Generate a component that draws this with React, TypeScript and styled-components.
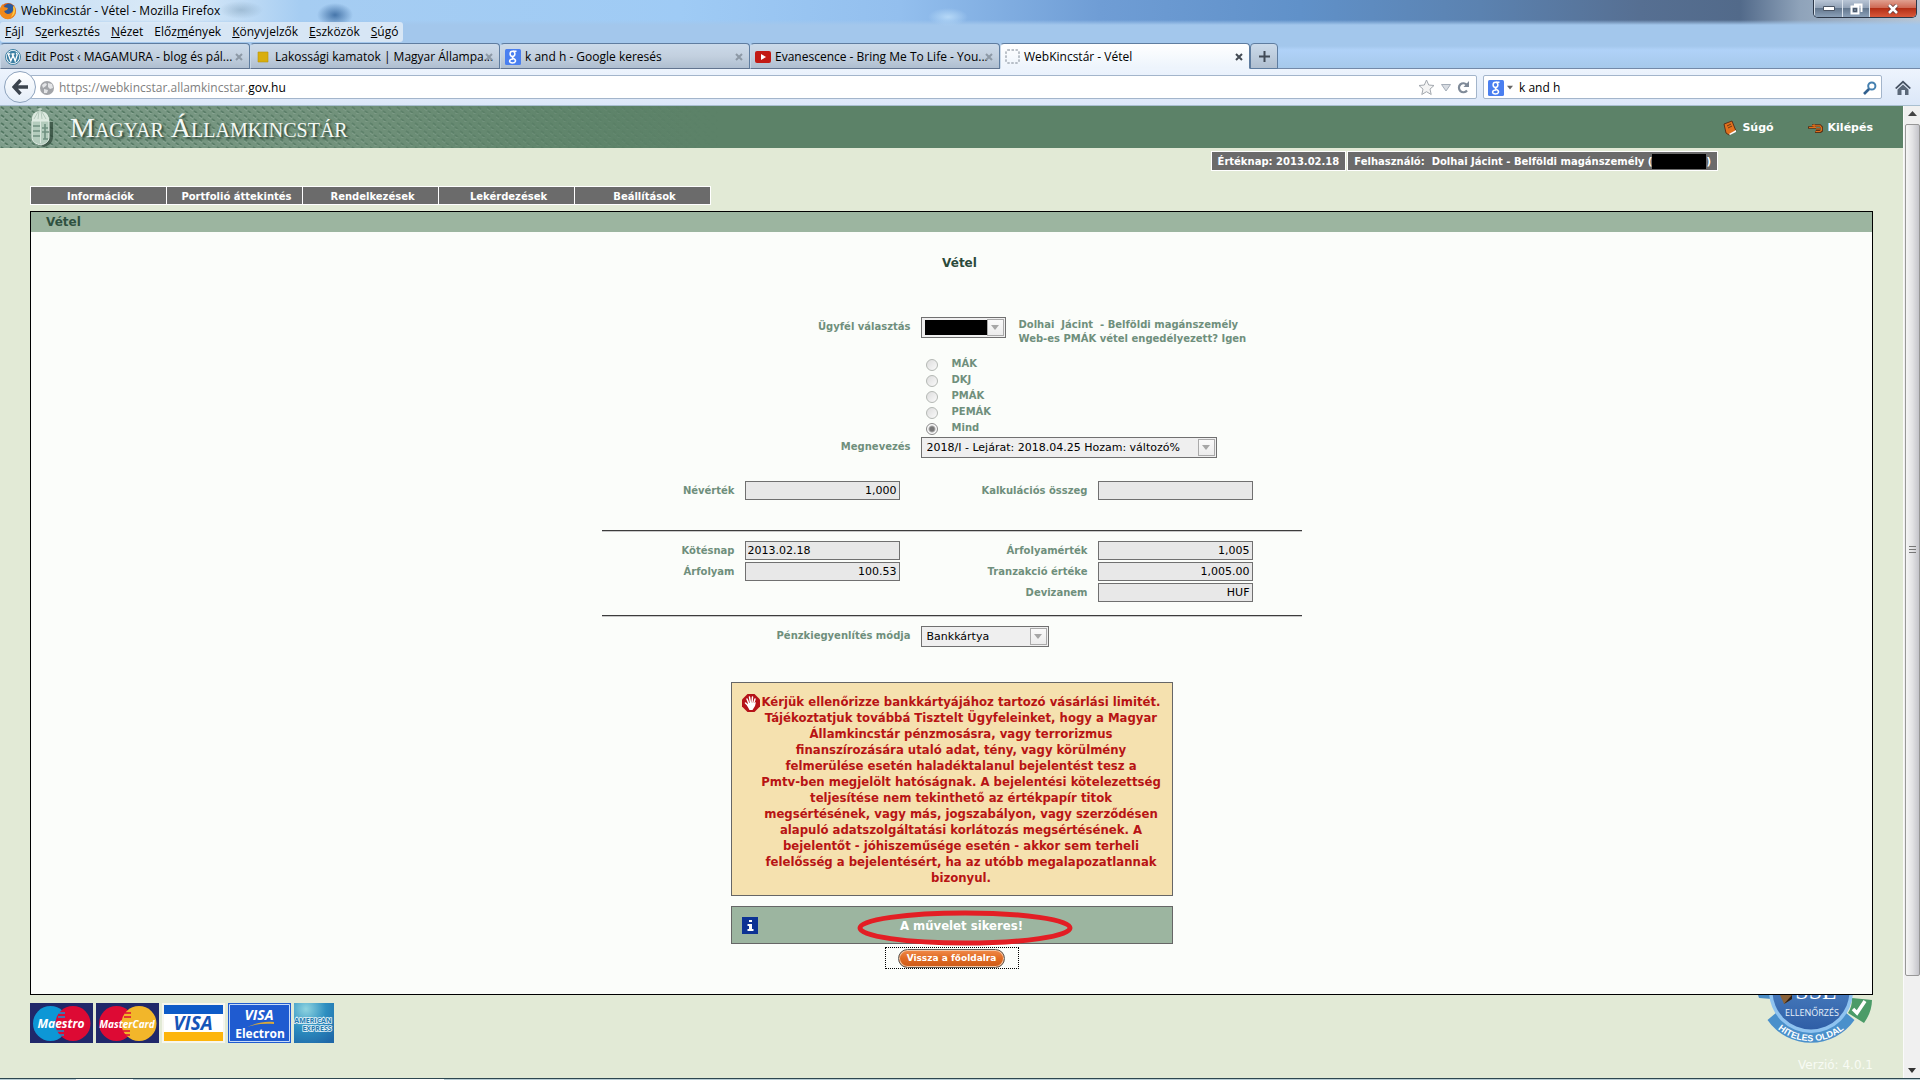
import React from "react";
import styled, { createGlobalStyle } from "styled-components";

const ui = '"Open Sans", "Noto Sans", sans-serif';
const web = '"DejaVu Sans", Verdana, sans-serif';

const GlobalStyle = createGlobalStyle`
  *, *::before, *::after { box-sizing: border-box; }
  body { margin: 0; font-family: ${web}; }
  button, input, select { font: inherit; margin: 0; }
  svg { display: block; flex: none; }
`;

const Window = styled.div`
  min-height: 100vh;
  display: flex;
  flex-direction: column;
  overflow: hidden;
`;

/* ---------- browser chrome ---------- */

const Chrome = styled.header`
  font: 12px/16px ${ui};
  color: #000;
  background:
    radial-gradient(ellipse 18px 12px at 335px 15px, #2f6098cc, transparent),
    radial-gradient(ellipse 22px 9px at 241px 10px, #6f8fa866, transparent),
    radial-gradient(ellipse 20px 9px at 948px 17px, #b5d8f7, transparent),
    linear-gradient(#0000 20px, #a3c7ec 25px, #a3c7ec 46px, #b0d2f8 50px, #a5c8ea 69px),
    linear-gradient(90deg, #c3dcf3 0, #dcebf8 180px, #a6cdf2 300px, #9fcbf5 680px, #93bfee 900px, #6f9dd5 1100px, #6091c9 1300px, #5b82b0 1480px, #566f92 1640px, #526a8a 1740px, #8fa3ba 1800px, #b7c6d6 100%);
`;

const TitleBar = styled.div`
  display: flex;
  height: 22px;
  justify-content: space-between;
`;

const TitleText = styled.div`
  display: flex;
  gap: 5px;
  align-items: center;
`;

const WindowButtons = styled.div`
  display: flex;
  height: 18px;
  margin-right: 3px;
  border: 1px solid #2c3748;
  border-top: 0;
  border-radius: 0 0 5px 5px;
  overflow: hidden;
`;

const WindowButton = styled.button<{ $w: number; $danger?: boolean }>`
  width: ${(p) => p.$w}px;
  padding: 0;
  border: 0;
  border-left: 1px solid #d9e2ec;
  display: grid;
  place-items: center;
  background: ${(p) =>
    p.$danger
      ? "linear-gradient(#e0a090, #cf6a55 45%, #b42f16 50%, #d9583a)"
      : "linear-gradient(#b9c6d6, #93a3b8 45%, #64788f 50%, #8ba0b8)"};
`;

const MenuBar = styled.nav`
  display: flex;
  width: max-content;
  height: 20px;
  margin-bottom: 1px;
  padding: 0 5px;
  gap: 11px;
  align-items: center;
  background: #e3edf8cc;
  border-radius: 3px;
`;

const MenuItem = styled.button`
  padding: 0;
  border: 0;
  background: none;
  color: #000;
`;

const TabStrip = styled.div`
  display: flex;
  height: 26px;
  box-shadow: inset 0 -1px #7389a8;
`;

const Tab = styled.div<{ $active?: boolean }>`
  width: 250px;
  min-width: 0;
  padding: 1px 6px 0 4px;
  display: flex;
  gap: 4px;
  align-items: center;
  border: 1px solid #5f7da0;
  border-left-color: #c9d8e8;
  border-bottom-color: ${(p) => (p.$active ? "#eef4fc" : "#62748f")};
  border-radius: 4px 4px 0 0;
  background: ${(p) => (p.$active ? "linear-gradient(#fff, #edf4fc)" : "linear-gradient(#cbdaea, #c3d0df 50%, #afbed0)")};
`;

const TabTitle = styled.span`
  flex: 1;
  min-width: 0;
  white-space: nowrap;
`;

const TabClose = styled.button<{ $active?: boolean }>`
  padding: 0;
  border: 0;
  background: none;
  color: ${(p) => (p.$active ? "#444b54" : "#8d99a6")};
`;

const NewTab = styled.button`
  width: 28px;
  padding: 0;
  display: grid;
  place-items: center;
  border: 1px solid #5f7da0;
  border-radius: 4px 4px 0 0;
  background: linear-gradient(#cbdaea, #b0bfd0);
`;

const NavBar = styled.div`
  height: 37px;
  display: flex;
  align-items: center;
  padding: 0 9px 0 4px;
  background: linear-gradient(#edf4fd, #dbe7f8);
  border-bottom: 1px solid #a9bfd0;
`;

const BackButton = styled.button`
  width: 32px;
  height: 32px;
  padding: 0;
  display: grid;
  place-items: center;
  border: 1px solid #8ea3bd;
  border-radius: 50%;
  background: linear-gradient(#fff, #e4edf8);
  z-index: 1;
`;

const Address = styled.div`
  flex: 1;
  height: 24px;
  margin-left: -6px;
  padding: 1px 6px 0 9px;
  display: flex;
  align-items: center;
  background: #fff;
  border: 1px solid #a3b5cb;
  border-radius: 2px;
`;

const Url = styled.div`
  flex: 1;
  margin-left: 5px;
  color: #808080;
  b { font-weight: 400; color: #000; }
`;

const AddressIcons = styled.div`
  display: flex;
  align-items: center;
  gap: 6px;
`;

const SearchBox = styled.label`
  width: 399px;
  height: 24px;
  margin: 0 13px 0 6px;
  padding: 1px 4px 0;
  display: flex;
  align-items: center;
  gap: 3px;
  background: #fff;
  border: 1px solid #a3b5cb;
  border-radius: 2px;
`;

const SearchInput = styled.input`
  flex: 1;
  min-width: 0;
  padding: 0 3px;
  border: 0;
  background: none;
  color: #000;
`;

/* ---------- web page ---------- */

const Viewport = styled.div`
  flex: 1;
  display: flex;
  background: #e2ead6;
`;

const Page = styled.div`
  flex: 1;
  min-width: 0;
`;

const Banner = styled.div`
  height: 42px;
  display: grid;
  background: #5c8268;
`;

const BannerTexture = styled.svg`
  grid-area: 1 / 1;
`;

const BannerContent = styled.div`
  grid-area: 1 / 1;
  z-index: 1;
  display: flex;
  align-items: center;
  padding: 2px 30px 0;
`;

const BrandName = styled.h1`
  flex: 1;
  margin: 0 0 0 16px;
  font: small-caps 400 28px/32px "Liberation Serif", "Times New Roman", serif;
  color: #f4f8f4;
  text-shadow: 2px 2px 2px #2e4636;
`;

const BannerLink = styled.a`
  display: flex;
  align-items: center;
  gap: 5px;
  margin-left: 34px;
  font: bold 11px/16px ${web};
  color: #fff;
  text-decoration: none;
`;

const SessionInfo = styled.div`
  display: flex;
  justify-content: flex-end;
  gap: 1px;
  padding: 3px 185px 0 0;
`;

const InfoTag = styled.div`
  height: 20px;
  display: flex;
  align-items: center;
  padding: 1px 6px 0;
  white-space: pre;
  font: bold 10px/16px ${web};
  color: #fff;
  background: #6b6b6b;
  border: 1px solid #fff;
`;

const Redacted = styled.span<{ $w: number }>`
  width: ${(p) => p.$w}px;
  height: 15px;
  background: #000;
`;

const MainNav = styled.nav`
  width: max-content;
  margin: 15px 0 6px 30px;
  display: flex;
  gap: 1px;
  padding: 1px;
  background: #fff;
`;

const MainNavItem = styled.a`
  width: 135px;
  height: 17px;
  padding-left: 4px;
  text-align: center;
  white-space: nowrap;
  font: bold 10px/20px ${web};
  color: #fff;
  background: #6b6b6b;
  text-decoration: none;
`;

const Panel = styled.main`
  margin: 0 30px;
  border: 1px solid #000;
  background: #fbfdfa;
`;

const PanelTitle = styled.div`
  height: 20px;
  padding-left: 15px;
  font: bold 12px/21px ${web};
  color: #2f5140;
  background: #9cb5a0;
`;

const Form = styled.form`
  width: 700px;
  margin: 0 auto;
  padding: 23px 0 25px;
  font: bold 10px/14px ${web};
  color: #6f8f7c;
`;

const FormTitle = styled.h2`
  margin: 0 0 46px;
  padding-left: 16px;
  text-align: center;
  font: bold 12px/16px ${web};
  color: #2b4a3b;
`;

const ChoiceRow = styled.div<{ $after?: number }>`
  display: grid;
  grid-template-columns: 309px max-content 1fr;
  column-gap: 10px;
  align-items: start;
  margin-bottom: ${(p) => p.$after ?? 0}px;
`;

const FieldLabel = styled.label`
  text-align: right;
  line-height: 19px;
  white-space: nowrap;
`;

const SelectFrame = styled.div<{ $w: number }>`
  width: ${(p) => p.$w}px;
  height: 21px;
  padding: 1px 1px 1px 0;
  display: flex;
  align-items: center;
  border: 1px solid #707070;
  background: #efefef;
`;

const SelectInput = styled.select`
  flex: 1;
  min-width: 0;
  height: 17px;
  padding: 0 0 0 5px;
  appearance: none;
  border: 0;
  border-radius: 0;
  background: none;
  color: #000;
  font: 11px/17px ${web};
`;

const ArrowBox = styled.span`
  width: 17px;
  height: 17px;
  flex: none;
  display: grid;
  place-items: center;
  border: 1px solid #aaa;
  background: linear-gradient(#fafafa, #ececec);
`;

const MaskedSelect = styled.span`
  flex: 1;
  min-width: 0;
  height: 15px;
  margin-left: 3px;
  display: flex;
  background: #000;
`;

const ClientNote = styled.p`
  margin: 1px 0 0 3px;
  white-space: pre;
`;

const RadioGroup = styled.fieldset`
  margin: 0 0 0 324px;
  padding: 0;
  border: 0;
`;

const RadioOption = styled.label`
  height: 16px;
  display: flex;
  align-items: flex-start;
  gap: 14px;
`;

const Radio = styled.input`
  appearance: none;
  width: 12px;
  height: 12px;
  margin-top: 2px;
  border: 1px solid #b4b8b4;
  border-radius: 50%;
  background: linear-gradient(135deg, #ddd, #fafafa);
  &:checked {
    border-color: #8a8a8a;
    background: radial-gradient(circle, #777 0 2px, #aaa 3px, #fafafa 4px);
  }
`;

const FieldGrid = styled.div`
  display: grid;
  grid-template-columns: 133px 155px 178px 155px;
  column-gap: 10px;
  row-gap: 2px;
`;

const TextField = styled.input<{ $left?: boolean }>`
  width: 100%;
  height: 19px;
  padding: 0 2px;
  border: 1px solid #707070;
  border-radius: 0;
  background: #e8e8e8;
  color: #000;
  font: 11px/17px ${web};
  text-align: ${(p) => (p.$left ? "left" : "right")};
`;

const Rule = styled.hr<{ $before: number }>`
  height: 2px;
  margin: ${(p) => p.$before}px 0 9px;
  border: 0;
  border-top: 1px solid #3c3c3c;
  background: #c8c8c8;
`;

const Notice = styled.section`
  width: 442px;
  margin: 35px auto 10px;
  padding: 11px 9px 9px 10px;
  display: flex;
  border: 1px solid #666;
  background: #f5e1af;
`;

const NoticeText = styled.p`
  flex: 1;
  margin: 0;
  text-align: center;
  white-space: nowrap;
  font: bold 13px/16px "DejaVu Sans Condensed", ${web};
  color: #b81414;
`;

const Result = styled.section`
  position: relative;
  width: 442px;
  height: 38px;
  margin: 0 auto 3px;
  padding: 1px 6px 0 10px;
  display: flex;
  align-items: center;
  border: 1px solid #666;
  background: #9cb5a0;
`;

const ResultText = styled.p`
  flex: 1;
  margin: 0;
  text-align: center;
  font: bold 13px/16px "DejaVu Sans Condensed", ${web};
  color: #fff;
`;

const Marker = styled.svg`
  position: absolute;
  left: 125px;
  top: 3px;
`;

const BackFrame = styled.div`
  width: 134px;
  height: 22px;
  margin: 0 auto;
  display: grid;
  place-items: center;
  border: 1px dotted #000;
`;

const BackHome = styled.button`
  height: 19px;
  padding: 0 8px;
  white-space: nowrap;
  font: bold 9px/15px ${web};
  color: #fff;
  border: 1px solid #5f5a55;
  border-radius: 10px;
  background: linear-gradient(#f08a4a, #e06a22 50%, #cc5a18);
  box-shadow: inset 0 0 0 1px #f3c7a6;
`;

const Footer = styled.footer`
  display: flex;
  justify-content: space-between;
  padding: 0 30px;
`;

const Cards = styled.div`
  display: flex;
  gap: 3px;
  padding-top: 8px;
`;

const FooterRight = styled.div`
  display: flex;
  flex-direction: column;
  align-items: flex-end;
`;

const Version = styled.span`
  margin-top: 12px;
  font: 12px/16px ${web};
  color: #f8fbf4;
`;

const Scrollbar = styled.div`
  width: 17px;
  display: flex;
  flex-direction: column;
  align-items: center;
  justify-content: space-between;
  padding: 5px 1px;
  gap: 8px;
  background: #f0f0f0;
  border-left: 1px solid #fafafa;
`;

const Thumb = styled.div`
  width: 15px;
  flex: 1;
  margin-bottom: 84px;
  display: grid;
  place-items: center;
  border: 1px solid #979797;
  border-radius: 2px;
  background: linear-gradient(90deg, #f6f6f6, #e2e2e4 50%, #c4c4ca);
`;

const Taskbar = styled.div`
  height: 2px;
  border-top: 1px solid #2d4750;
  background: linear-gradient(90deg, #b8cdd4 76px, #fff 76px 133px, #b8cdd4 133px 200px, #fff 200px 444px, #b8cdd4 444px);
`;

/* ---------- drawings ---------- */

const Firefox = () => (
  <svg width="16" height="18" viewBox="0 0 16 18">
    <circle cx="8" cy="9" r="8" fill="#d9601a" />
    <circle cx="9" cy="7" r="5.4" fill="#2c5a9c" />
    <path d="M0 7C1 4 2 3 3 2l1 3 4 1-1 2-3 1c1 3 4 4 7 2 2-1 3-4 2-7 3 3 4 8 0 11-4 4-11 2-13-3z" fill="#f08a1c" />
    <path d="M14 4c2 4 1 9-3 11 2-3 3-7 2-10z" fill="#fbd04a" />
  </svg>
);

const WordPress = () => (
  <svg width="16" height="16" viewBox="0 0 16 16">
    <circle cx="8" cy="8" r="7.5" fill="#fff" stroke="#3c7fa3" />
    <circle cx="8" cy="8" r="6.2" fill="#3c7fa3" />
    <path d="M3.2 5l2.6 7L7.8 7 7 5M7.6 5l2.6 7 2-6c0-1-1-1.500-.7-2.300M2.800 5h2.500M6.500 5h3" fill="none" stroke="#fff" strokeWidth="1.300" />
  </svg>
);

const GoldSquare = () => (
  <svg width="16" height="16"><path d="M3 3h10v10H3z" fill="#d9ae0c" stroke="#b8940c" strokeWidth=".6" /></svg>
);

const GoogleIcon = () => (
  <svg width="16" height="16" viewBox="0 0 16 16">
    <rect width="16" height="16" rx="1.500" fill="#4a7ff0" />
    <g fill="none" stroke="#fff" strokeWidth="1.500">
      <ellipse cx="7.500" cy="4.800" rx="2.400" ry="2.600" />
      <path d="M8 2.200h3.500M8.500 7.300c-2 .8-1 1.700.3 2.400 3 1.600 1.700 4.300-1.300 4.300-4 0-4-4 .8-4" />
    </g>
  </svg>
);

const YouTube = () => (
  <svg width="16" height="12"><rect width="16" height="12" rx="2" fill="#c21a14" /><path d="M6 3l5 3-5 3z" fill="#fff" /></svg>
);

const BlankPage = () => (
  <svg width="15" height="15"><rect x="1" y="1" width="13" height="13" rx="1.500" fill="none" stroke="#7c8692" strokeDasharray="2.500 1.500" /></svg>
);

const CloseX = () => (
  <svg width="8" height="8"><path d="M1 1l6 6M7 1l-6 6" stroke="currentColor" strokeWidth="2" /></svg>
);

const Triangle = ({ w = 8, c = "#a6a6a6" }: { w?: number; c?: string }) => (
  <svg width={w} height="5" viewBox="0 0 8 5"><path d="M0 0h8L4 5z" fill={c} /></svg>
);

const Globe = () => (
  <svg width="14" height="14" viewBox="0 0 14 14">
    <circle cx="7" cy="7" r="7" fill="#a2a4a8" />
    <path d="M2 4l3-2 2 1-1 2-3 2zM8 2l4 1 1 4-3 1-2-2zM4 8l4 1-1 3-3 0z" fill="#e4e5e7" />
  </svg>
);

const Crest = () => (
  <svg width="24" height="40" viewBox="0 2 24 40">
    <path d="M3 16h20v15c0 6-5 9-9 10-5-1-11-4-11-10z" fill="#2b4334" opacity=".7" />
    <path d="M2 15c-1-6 3-10 8-10s10 4 9 10z" fill="#dce9df" />
    <path d="M8 3h4M10 1v5" stroke="#cfe0d4" fill="none" />
    <path d="M4 13l4-7M8 13l1-8M12 13l-1-8M16 13l-4-7" stroke="#b4c9bb" fill="none" />
    <path d="M2 15h17v16c0 5-4 7-8 8-5-1-9-3-9-8z" fill="#b4ccbd" stroke="#e3eee6" />
    <path d="M3 20h7M3 25h7M3 30h7M15 18v15M12 22h6M12 26h7M13 33h5" stroke="#6f9080" strokeWidth="1.600" fill="none" />
    <path d="M10.500 15v22" stroke="#dbe8df" />
  </svg>
);

const Book = () => (
  <svg width="14" height="16" viewBox="0 0 14 16">
    <path d="M1 4l8-3 4 10-7 4-3-2z" fill="#e0701c" stroke="#5a3218" />
    <path d="M6 14l7-4v2l-6 3z" fill="#fff" />
    <path d="M4 6l4-2M5 8l4-2" stroke="#6a3a14" />
  </svg>
);

const ExitHand = () => (
  <svg width="15" height="10" viewBox="0 0 15 10">
    <path d="M0 4.500h8M4 2.500h8l2 2v3l-2 1.500H7M8 6.500h4" fill="none" stroke="#5a3218" strokeWidth="2.600" />
    <path d="M1 4.500h7M4 3l2-1v2M6 2.800h6l1.500 2v2.400L12 8.500H7.500M8 6h4" fill="none" stroke="#e0701c" strokeWidth="1.200" />
  </svg>
);

const StopHand = () => (
  <svg width="18" height="18" viewBox="0 0 18 18">
    <path d="M5.500 0h7L18 5.500v7L12.500 18h-7L0 12.500v-7z" fill="#b51218" />
    <path d="M5 5l2 5M7.500 3l1 6M10.500 3l-.5 6M13 5l-1.500 5M3.500 9l3 3" stroke="#fff" strokeWidth="1.500" strokeLinecap="round" />
    <path d="M6 9h6.500l1.500-1-1 4-2.500 4h-3L5 11.500z" fill="#fff" />
  </svg>
);

const InfoIcon = () => (
  <svg width="16" height="17"><rect width="16" height="17" fill="#0d3294" /><path d="M7 3h3v2H7zM5.500 7H10v5h1.500v2h-6v-2H7V9H5.500z" fill="#fff" /></svg>
);

const cardText = { fontFamily: '"Open Sans", sans-serif', fontWeight: 700, fill: "#fff", textAnchor: "middle" } as const;

const CirclesCard = ({ name, left, right, size }: { name: string; left: string; right: string; size: number }) => (
  <svg width="63" height="40" viewBox="0 0 63 40">
    <rect width="63" height="40" fill="#20286a" />
    <circle cx="20.500" cy="20.500" r="17.500" fill={left} />
    <circle cx="43" cy="20.500" r="17.500" fill={right} />
    <path d="M29 10h6M28 14h7M27 28h7M28 32h6" stroke={left} strokeWidth="1.500" />
    <text x="31" y="25" fontSize={size} fontStyle="italic" {...cardText}>{name}</text>
  </svg>
);

const VisaCard = () => (
  <svg width="63" height="40" viewBox="0 0 63 40">
    <rect width="63" height="40" fill="#f6f6ee" />
    <path d="M2 2h59v9H2z" fill="#0d5bc8" />
    <path d="M2 29h59v9H2z" fill="#fdb50c" />
    <path d="M2 11h59v18H2z" fill="#fff" />
    <text x="31" y="27" fontSize="19" fontStyle="italic" {...cardText} fill="#1555b8">VISA</text>
  </svg>
);

const VisaElectron = () => (
  <svg width="63" height="40" viewBox="0 0 63 40">
    <rect width="63" height="40" fill="#1f5bd0" />
    <path d="M1.500 1.500h60v37h-60z" fill="none" stroke="#c9dcf8" />
    <text x="31" y="17" fontSize="14" fontStyle="italic" {...cardText}>VISA</text>
    <path d="M19 24c9-4 17-6 27-5v2c-9-1-18 0-27 3z" fill="#d9a93a" />
    <text x="32" y="35" fontSize="12" {...cardText}>Electron</text>
  </svg>
);

const Amex = () => (
  <svg width="40" height="40" viewBox="0 0 40 40">
    <defs>
      <radialGradient id="amex" cx=".3" cy=".15" r="1"><stop stopColor="#8fd4e0" /><stop offset=".5" stopColor="#2d8fc0" /><stop offset="1" stopColor="#1f68a8" /></radialGradient>
    </defs>
    <rect width="40" height="40" fill="url(#amex)" />
    <g stroke="#e3f3f9" strokeWidth="1.600" paintOrder="stroke">
      <text x="19" y="20" fontSize="7" {...cardText} fill="#2478ae">AMERICAN</text>
      <text x="23" y="28" fontSize="7" {...cardText} fill="#2478ae">EXPRESS</text>
    </g>
  </svg>
);

const SslBadge = () => (
  <svg width="118" height="50" viewBox="0 0 118 50" role="img" aria-label="SSL ellenőrzés, hiteles oldal">
    <defs>
      <linearGradient id="disc" x1="0" y1="0" x2="0" y2="1"><stop stopColor="#5b93cf" /><stop offset="1" stopColor="#2f5ea6" /></linearGradient>
      <path id="ribbon" d="M12 21A51 51 0 0 0 100 21" />
    </defs>
    <path d="M3 0h14v4L4 3z" fill="#4a8cc4" />
    <path d="M12.500 25A53 53 0 0 0 99.500 25L90 17A41 41 0 0 1 22 17z" fill="#4a90cb" />
    <path d="M97 3l20 2c0 8-3 16-8 23L93 18c3-5 4-9 4-15z" fill="#4b9b68" />
    <circle cx="56" cy="-4" r="42" fill="#8fc3f0" />
    <circle cx="56" cy="-4" r="38.500" fill="url(#disc)" />
    <path d="M25 0h12v4l-8 5z" fill="#8a6238" /><path d="M29 9l8-9v4z" fill="#2c2018" />
    <text x="61" y="4" fontSize="24" fontFamily='"Liberation Serif", serif' textAnchor="middle" fill="#fff">SSL</text>
    <text x="57" y="21" fontSize="9" fontFamily='"Open Sans", sans-serif' textAnchor="middle" fill="#e6f0fa">ELLENŐRZÉS</text>
    <text fontSize="9" fontWeight="700" fontFamily='"Liberation Sans", sans-serif' fill="#fff">
      <textPath href="#ribbon" startOffset="50%" textAnchor="middle">HITELES OLDAL</textPath>
    </text>
    <path d="M98 14l4 4 8-12" fill="none" stroke="#fff" strokeWidth="3.500" />
  </svg>
);

const Texture = () => (
  <BannerTexture width="720" height="42" aria-hidden="true">
    <defs>
      <pattern id="weave" width="9" height="8" patternUnits="userSpaceOnUse">
        <path d="M1 1l3 2M5 5l3 2" stroke="#3f6650" strokeWidth="1.800" />
        <path d="M1 3l3 2M5 7l3 1" stroke="#9db5a6" strokeWidth="1" />
      </pattern>
      <linearGradient id="fadeOut"><stop stopColor="#fff" stopOpacity=".7" /><stop offset=".45" stopColor="#fff" stopOpacity=".4" /><stop offset="1" stopColor="#fff" stopOpacity="0" /></linearGradient>
      <linearGradient id="mist"><stop stopColor="#7f9d8b" /><stop offset=".5" stopColor="#76957f" stopOpacity=".8" /><stop offset="1" stopColor="#5c8268" stopOpacity="0" /></linearGradient>
      <mask id="fade"><rect width="720" height="42" fill="url(#fadeOut)" /></mask>
    </defs>
    <rect width="720" height="42" fill="url(#mist)" />
    <rect width="720" height="42" fill="url(#weave)" mask="url(#fade)" />
  </BannerTexture>
);

/* ---------- data ---------- */

const menu: [string, string, string][] = [
  ["", "F", "ájl"], ["S", "z", "erkesztés"], ["", "N", "ézet"], ["Előz", "m", "ények"],
  ["", "K", "önyvjelzők"], ["", "E", "szközök"], ["", "S", "úgó"],
];

const tabs = [
  { icon: <WordPress />, title: "Edit Post ‹ MAGAMURA - blog és pál..." },
  { icon: <GoldSquare />, title: "Lakossági kamatok | Magyar Állampa..." },
  { icon: <GoogleIcon />, title: "k and h - Google keresés" },
  { icon: <YouTube />, title: "Evanescence - Bring Me To Life - You..." },
  { icon: <BlankPage />, title: "WebKincstár - Vétel", active: true },
];

const sections = ["Információk", "Portfolió áttekintés", "Rendelkezések", "Lekérdezések", "Beállítások"];
const papers = ["MÁK", "DKJ", "PMÁK", "PEMÁK", "Mind"];

const noticeLines = [
  "Kérjük ellenőrizze bankkártyájához tartozó vásárlási limitét.",
  "Tájékoztatjuk továbbá Tisztelt Ügyfeleinket, hogy a Magyar",
  "Államkincstár pénzmosásra, vagy terrorizmus",
  "finanszírozására utaló adat, tény, vagy körülmény",
  "felmerülése esetén haladéktalanul bejelentést tesz a",
  "Pmtv-ben megjelölt hatóságnak. A bejelentési kötelezettség",
  "teljesítése nem tekinthető az értékpapír titok",
  "megsértésének, vagy más, jogszabályon, vagy szerződésen",
  "alapuló adatszolgáltatási korlátozás megsértésének. A",
  "bejelentőt - jóhiszeműsége esetén - akkor sem terheli",
  "felelősség a bejelentésért, ha az utóbb megalapozatlannak",
  "bizonyul.",
];

const Field = ({ id, label, value, left }: { id: string; label: string; value: string; left?: boolean }) => (
  <>
    <FieldLabel htmlFor={id}>{label}</FieldLabel>
    <TextField id={id} defaultValue={value} readOnly $left={left} />
  </>
);

const Select = ({ id, w, value }: { id: string; w: number; value: string }) => (
  <SelectFrame $w={w}>
    <SelectInput id={id}><option>{value}</option></SelectInput>
    <ArrowBox><Triangle /></ArrowBox>
  </SelectFrame>
);

export default function App() {
  return (
    <Window>
      <GlobalStyle />
      <Chrome>
        <TitleBar>
          <TitleText><Firefox />WebKincstár - Vétel - Mozilla Firefox</TitleText>
          <WindowButtons>
            <WindowButton $w={28} aria-label="Kis méret"><svg width="12" height="5"><path d="M.5.500h11v4H.5z" fill="#fff" stroke="#4b5666" /></svg></WindowButton>
            <WindowButton $w={27} aria-label="Előző méret"><svg width="13" height="12"><path d="M4 1.500h7.500V9M1.500 3.500h7v7h-7z" fill="none" stroke="#fff" strokeWidth="2" /><path d="M3.500 5.500h3v3h-3z" fill="none" stroke="#4b5666" /></svg></WindowButton>
            <WindowButton $w={47} $danger aria-label="Bezárás"><svg width="12" height="10"><path d="M2 1l8 8M10 1L2 9" stroke="#5b3030" strokeWidth="4" /><path d="M2 1l8 8M10 1L2 9" stroke="#fff" strokeWidth="2.600" /></svg></WindowButton>
          </WindowButtons>
        </TitleBar>
        <MenuBar>
          {menu.map(([a, k, b]) => <MenuItem key={a + k + b}>{a}<u>{k}</u>{b}</MenuItem>)}
        </MenuBar>
        <TabStrip>
          {tabs.map((t) => (
            <Tab key={t.title} $active={t.active}>
              {t.icon}<TabTitle>{t.title}</TabTitle>
              <TabClose $active={t.active} aria-label="Lap bezárása"><CloseX /></TabClose>
            </Tab>
          ))}
          <NewTab aria-label="Új lap"><svg width="11" height="11"><path d="M5.500 0v11M0 5.500h11" stroke="#414a56" strokeWidth="2" /></svg></NewTab>
        </TabStrip>
        <NavBar>
          <BackButton aria-label="Vissza"><svg width="16" height="16"><path d="M8.500 1L2 8l6.500 7M2.500 8H16" fill="none" stroke="#3c444e" strokeWidth="3.400" /></svg></BackButton>
          <Address>
            <Globe />
            <Url>https://webkincstar.allamkincstar.<b>gov.hu</b></Url>
            <AddressIcons>
              <svg width="17" height="17" viewBox="0 0 17 17"><path d="M8.500 1l2.200 5 5.300.5-4 3.600 1.200 5.400-4.700-2.800-4.700 2.800L5 10.100 1 6.500 6.300 6z" fill="#f4f4f4" stroke="#a3a8ae" /></svg>
              <svg width="10" height="8"><path d="M.5.500h9L5 7z" fill="#d8dce2" stroke="#a5adb8" /></svg>
              <svg width="13" height="13" viewBox="0 0 13 13"><path d="M10 9.500A4.500 4.500 0 1 1 10 4" fill="none" stroke="#7f8a98" strokeWidth="2.200" /><path d="M12 0v6H6.500z" fill="#7f8a98" /></svg>
            </AddressIcons>
          </Address>
          <SearchBox>
            <GoogleIcon /><Triangle w={6} c="#666" />
            <SearchInput aria-label="Keresés" defaultValue="k and h" />
            <svg width="14" height="14"><circle cx="8.800" cy="5" r="3.600" fill="none" stroke="#4580b0" strokeWidth="2" /><path d="M6 8l-5 5" stroke="#31608f" strokeWidth="2.600" /></svg>
          </SearchBox>
          <svg width="16" height="15" viewBox="0 0 16 15"><path d="M0 8l8-7.500L16 8l-1.500 1L8 3 1.500 9z" fill="#465262" /><path d="M2.500 9.500L8 4.500l5.500 5V15H10v-5H6.500v5h-4z" fill="#5b6878" /></svg>
        </NavBar>
      </Chrome>

      <Viewport>
        <Page>
          <Banner>
            <Texture />
            <BannerContent>
              <Crest />
              <BrandName>Magyar Államkincstár</BrandName>
              <BannerLink href="#sugo"><Book />Súgó</BannerLink>
              <BannerLink href="#kilepes"><ExitHand />Kilépés</BannerLink>
            </BannerContent>
          </Banner>

          <SessionInfo>
            <InfoTag>Értéknap: 2013.02.18</InfoTag>
            <InfoTag>{"Felhasználó:  Dolhai Jácint - Belföldi magánszemély ("}<Redacted $w={54} />)</InfoTag>
          </SessionInfo>

          <MainNav>
            {sections.map((s) => <MainNavItem key={s} href="#menu">{s}</MainNavItem>)}
          </MainNav>

          <Panel>
            <PanelTitle>Vétel</PanelTitle>
            <Form onSubmit={(e) => e.preventDefault()}>
              <FormTitle>Vétel</FormTitle>

              <ChoiceRow $after={11}>
                <FieldLabel htmlFor="client">Ügyfél választás</FieldLabel>
                <SelectFrame $w={85}>
                  <MaskedSelect><SelectInput id="client"><option value="" /></SelectInput></MaskedSelect>
                  <ArrowBox><Triangle /></ArrowBox>
                </SelectFrame>
                <ClientNote>{"Dolhai  Jácint  - Belföldi magánszemély\nWeb-es PMÁK vétel engedélyezett? Igen"}</ClientNote>
              </ChoiceRow>

              <RadioGroup aria-label="Értékpapír típusa">
                {papers.map((p) => (
                  <RadioOption key={p}><Radio type="radio" name="paper" defaultChecked={p === "Mind"} />{p}</RadioOption>
                ))}
              </RadioGroup>

              <ChoiceRow $after={23}>
                <FieldLabel htmlFor="paperName">Megnevezés</FieldLabel>
                <Select id="paperName" w={296} value="2018/I - Lejárat: 2018.04.25 Hozam: változó%" />
              </ChoiceRow>

              <FieldGrid>
                <Field id="nominal" label="Névérték" value="1,000" />
                <Field id="calc" label="Kalkulációs összeg" value="" />
              </FieldGrid>

              <Rule $before={30} />

              <FieldGrid>
                <Field id="day" label="Kötésnap" value="2013.02.18" left />
                <Field id="rateValue" label="Árfolyamérték" value="1,005" />
                <Field id="rate" label="Árfolyam" value="100.53" />
                <Field id="total" label="Tranzakció értéke" value="1,005.00" />
                <span /><span />
                <Field id="currency" label="Devizanem" value="HUF" />
              </FieldGrid>

              <Rule $before={13} />

              <ChoiceRow>
                <FieldLabel htmlFor="payment">Pénzkiegyenlítés módja</FieldLabel>
                <Select id="payment" w={128} value="Bankkártya" />
              </ChoiceRow>

              <Notice>
                <StopHand />
                <NoticeText>{noticeLines.map((l) => <React.Fragment key={l}>{l}<br /></React.Fragment>)}</NoticeText>
              </Notice>

              <Result>
                <InfoIcon />
                <ResultText>A művelet sikeres!</ResultText>
                <Marker width="216" height="36" viewBox="0 0 216 36" aria-hidden="true">
                  <ellipse cx="108" cy="18" rx="105" ry="15" fill="none" stroke="#e31e24" strokeWidth="5" />
                </Marker>
              </Result>

              <BackFrame><BackHome type="submit">Vissza a főoldalra</BackHome></BackFrame>
            </Form>
          </Panel>

          <Footer>
            <Cards>
              <CirclesCard name="Maestro" left="#0d97d6" right="#dd0a34" size={12} />
              <CirclesCard name="MasterCard" left="#dd0a34" right="#f2b62a" size={10} />
              <VisaCard />
              <VisaElectron />
              <Amex />
            </Cards>
            <FooterRight>
              <SslBadge />
              <Version>Verzió: 4.0.1</Version>
            </FooterRight>
          </Footer>
        </Page>
        <Scrollbar>
          <svg width="9" height="5"><path d="M0 5h9L4.500 0z" fill="#444" /></svg>
          <Thumb><svg width="7" height="8"><path d="M0 .5h7M0 3.500h7M0 6.500h7" stroke="#777" /></svg></Thumb>
          <svg width="8" height="5" viewBox="0 0 8 5"><path d="M0 0h8L4 5z" fill="#333" /></svg>
        </Scrollbar>
      </Viewport>
      <Taskbar />
    </Window>
  );
}
